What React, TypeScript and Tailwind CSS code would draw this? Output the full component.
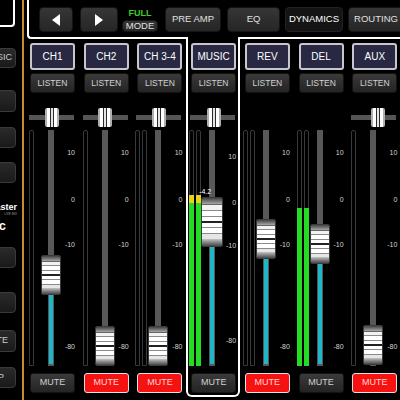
import React from "react";

type Strip = {
  name: string;
  stereo: boolean;
  pan: number | null;
  capTop: number;
  big?: boolean;
  mute: boolean;
  level: number | null;
  peak?: boolean;
  selected?: boolean;
  readout?: string;
};

const strips: Strip[] = [
  { name: "CH1", stereo: false, pan: 0, capTop: 125, mute: false, level: null },
  { name: "CH2", stereo: false, pan: 0, capTop: 196, mute: true, level: null },
  { name: "CH 3-4", stereo: true, pan: 0, capTop: 196, mute: true, level: null },
  { name: "MUSIC", stereo: true, pan: 1, capTop: 67, big: true, mute: false, level: 64, peak: true, selected: true, readout: "-4.2" },
  { name: "REV", stereo: true, pan: null, capTop: 89, mute: true, level: null },
  { name: "DEL", stereo: true, pan: null, capTop: 94, mute: false, level: 77 },
  { name: "AUX", stereo: false, pan: 4, capTop: 195, mute: true, level: null },
];

const stdLabels = [
  { t: "10", y: 22 },
  { t: "0", y: 69 },
  { t: "-10", y: 114 },
  { t: "-80", y: 216 },
];
const musicLabels = [
  { t: "10", y: 26 },
  { t: "0", y: 72 },
  { t: "-10", y: 115 },
  { t: "-80", y: 210 },
];

function Cap({ big }: { big?: boolean }) {
  return (
    <div
      className={`flex flex-col overflow-hidden rounded-[2px] border border-[#3a3a3a] ${
        big ? "w-[22px] h-[50px]" : "w-[20px] h-[40px]"
      }`}
    >
      <div className="flex-[5] bg-linear-to-b from-[#444] to-[#a8a8a8]" />
      <div className="h-px shrink-0 bg-[#666]" />
      <div className="flex-[4] bg-[#f2f2f2]" />
      <div className="h-px shrink-0 bg-[#8a8a8a]" />
      <div className="flex-[4] bg-white" />
      <div className="h-px shrink-0 bg-[#8a8a8a]" />
      <div className="flex-[3] bg-white" />
      <div className="h-[2px] shrink-0 bg-[#222]" />
      <div className="flex-[3] bg-white" />
      <div className="h-px shrink-0 bg-[#8a8a8a]" />
      <div className="flex-[4] bg-white" />
      <div className="h-px shrink-0 bg-[#8a8a8a]" />
      <div className="flex-[4] bg-[#e6e6e6]" />
      <div className="flex-[6] bg-linear-to-b from-[#c4c4c4] to-[#484848]" />
    </div>
  );
}

function Knob() {
  return (
    <div className="flex h-[19px] w-[14px] overflow-hidden rounded-[2px]">
      <div className="w-[2px] bg-[#b0b0b0]" />
      <div className="w-[3px] bg-white" />
      <div className="w-[1px] bg-[#2a2a2a]" />
      <div className="w-[2px] bg-[#e4e4e4]" />
      <div className="w-[1px] bg-[#2a2a2a]" />
      <div className="w-[3px] bg-white" />
      <div className="w-[2px] bg-[#b0b0b0]" />
    </div>
  );
}

function Meter({ level, peak, cls }: { level: number | null; peak?: boolean; cls: string }) {
  return (
    <div className={`relative h-full w-[5px] rounded-t-[2px] border border-[#3a3a3a] ${cls}`}>
      {level !== null && (
        <div
          className="absolute -left-px -right-px -bottom-px flex flex-col"
          style={{ top: level }}
        >
          {peak && <div className="h-[8px] shrink-0 bg-[#e6d418]" />}
          <div className="flex-1 bg-[#24dc24]" />
        </div>
      )}
    </div>
  );
}

const btnDark =
  "flex items-center justify-center rounded-[3px] border border-[#141414] bg-linear-to-b from-[#3a3a3a] to-[#242424] text-[#d0d0d0]";

function StripBody({ s }: { s: Strip }) {
  const capH = s.big ? 50 : 40;
  const labels = s.big ? musicLabels : stdLabels;
  return (
    <div className="flex flex-col">
      <div className="ml-[3px] mt-[4px] flex h-[27px] w-[45px] items-center justify-center rounded-[3px] border-2 border-[#c6c6cc] bg-[#282842] text-[10px] text-white">
        {s.name}
      </div>
      <div className={`ml-[3px] mt-[3px] h-[20px] w-[45px] text-[8.5px] ${btnDark}`}>LISTEN</div>
      {s.pan !== null ? (
        <div className="relative ml-[2px] mt-[15px] flex h-[19px] w-[45px] items-center">
          <div className="h-[5px] w-full bg-[#555]" />
          <div className="absolute top-0" style={{ left: 15.5 + s.pan }}>
            <Knob />
          </div>
        </div>
      ) : (
        <div className="mt-[15px] h-[19px]" />
      )}
      <div className="mt-[3px] flex h-[236px]">
        {s.stereo ? (
          <>
            <Meter level={s.level} peak={s.peak} cls="ml-[1px]" />
            <Meter level={s.level} peak={s.peak} cls="ml-[2px]" />
          </>
        ) : (
          <Meter level={s.level} cls="ml-[2px]" />
        )}
        <div className={`relative h-full w-[6px] bg-[#585858] ${s.stereo ? "ml-[8px]" : "ml-[14px]"}`}>
          <div
            className="absolute bottom-[2px] left-[1px] right-[1px] bg-[#1eb6c8]"
            style={{ top: s.capTop + capH / 2 }}
          />
          <div className="absolute left-1/2 -translate-x-1/2" style={{ top: s.capTop }}>
            <Cap big={s.big} />
          </div>
          {s.readout && (
            <div className="absolute left-[-10px] top-[58px] text-[7px] leading-none text-white">
              {s.readout}
            </div>
          )}
        </div>
        <div className="relative h-full w-[21px]">
          {labels.map((l) => (
            <div
              key={l.t}
              className="absolute right-0 text-[7px] leading-none text-[#d4d4d4]"
              style={{ top: l.y - 3.5 }}
            >
              {l.t}
            </div>
          ))}
        </div>
      </div>
      <div
        className={`ml-[3px] mt-[7px] h-[20px] w-[45px] text-[9px] ${
          s.mute
            ? "flex items-center justify-center rounded-[3px] border-[1.5px] border-[#e2e2e2] bg-[#f71212] text-[#ffd6d6]"
            : btnDark
        }`}
      >
        MUTE
      </div>
    </div>
  );
}

function SideBtn({ text, cls }: { text?: string; cls: string }) {
  return (
    <div
      className={`-ml-[20px] flex w-[36px] shrink-0 items-center justify-end rounded-[4px] border border-[#3a3a3a] bg-linear-to-b from-[#2a2a2a] to-[#1a1a1a] text-[9px] text-[#cccccc] ${cls}`}
    >
      {text}
    </div>
  );
}

const navBtn =
  "flex shrink-0 items-center justify-center rounded-[4px] border border-[#141414] bg-linear-to-b from-[#363636] to-[#262626] text-[9.5px] text-[#e0e0e0]";

export default function App() {
  return (
    <div className="relative flex h-[400px] w-[400px] overflow-hidden bg-black font-['Liberation_Sans',Arial,sans-serif]">
      {/* sidebar */}
      <div className="flex w-[22px] shrink-0 flex-col overflow-hidden">
        <div className="-ml-[20px] -mt-[2px] h-[29px] w-[35px] shrink-0 rounded-b-[4px] border-2 border-white" />
        <SideBtn text="MUSIC" cls="mt-[21px] h-[20px] pr-[3px]" />
        <SideBtn cls="mt-[22px] h-[22px]" />
        <SideBtn cls="mt-[15px] h-[21px]" />
        <SideBtn cls="mt-[14px] h-[21px]" />
        <div className="-ml-[40px] mt-[20px] w-[57px] shrink-0 text-right text-[9px] font-bold leading-none text-white">
          Master
        </div>
        <div className="-ml-[40px] mt-[1px] w-[57px] shrink-0 text-right text-[3px] leading-none text-[#999]">
          LIVE MIX
        </div>
        <div className="-ml-[20px] mt-[3px] w-[26px] shrink-0 text-right text-[13px] font-bold leading-none text-white">
          c
        </div>
        <SideBtn cls="mt-[15px] h-[21px]" />
        <SideBtn cls="mt-[24px] h-[21px]" />
        <SideBtn text="MUTE" cls="mt-[17px] h-[22px] pr-[7px]" />
        <SideBtn text="SETUP" cls="mt-[15px] h-[21px] pr-[11px]" />
      </div>
      {/* orange divider */}
      <div className="w-[2px] shrink-0 bg-[#cc8a30]" />
      {/* main */}
      <div className="flex w-[379px] shrink-0 flex-col pl-[3px]">
        <div className="flex h-[39px] shrink-0 items-start rounded-bl-[4px] border-b-2 border-l-2 border-white pl-[10px] pt-[7px]">
          <div className={`h-[25px] w-[34px] ${navBtn}`}>
            <svg width="8" height="12" viewBox="0 0 8 12">
              <polygon points="8,0 0,6 8,12" fill="#fff" />
            </svg>
          </div>
          <div className={`ml-[7px] h-[25px] w-[38px] ${navBtn}`}>
            <svg width="8" height="12" viewBox="0 0 8 12">
              <polygon points="0,0 8,6 0,12" fill="#fff" />
            </svg>
          </div>
          <div className="ml-[4px] flex h-[25px] w-[36px] shrink-0 flex-col items-center">
            <div className="flex h-[13px] items-center text-[9px] font-bold leading-none text-[#3fcc2a]">
              FULL
            </div>
            <div className={`h-[12px] w-[36px] text-[8.5px] ${navBtn} rounded-[2px]`}>MODE</div>
          </div>
          <div className={`ml-[7px] h-[25px] w-[56px] ${navBtn}`}>PRE AMP</div>
          <div className={`ml-[6px] h-[25px] w-[53px] ${navBtn}`}>EQ</div>
          <div className="ml-[5px] flex h-[25px] w-[58px] shrink-0 items-center justify-center rounded-[4px] border border-[#222] bg-[#141414] text-[9.5px] text-white">
            DYNAMICS
          </div>
          <div className={`ml-[5px] h-[25px] w-[56px] ${navBtn}`}>ROUTING</div>
        </div>
        <div className="grid h-[358px] shrink-0 grid-cols-7">
          {strips.map((s) =>
            s.selected ? (
              <div
                key={s.name}
                className="relative z-10 -ml-[2px] -mt-[2px] mr-[2px] rounded-b-[6px] border-x-2 border-b-2 border-white bg-black pt-[2px]"
              >
                <StripBody s={s} />
              </div>
            ) : (
              <div key={s.name}>
                <StripBody s={s} />
              </div>
            )
          )}
        </div>
      </div>
    </div>
  );
}
